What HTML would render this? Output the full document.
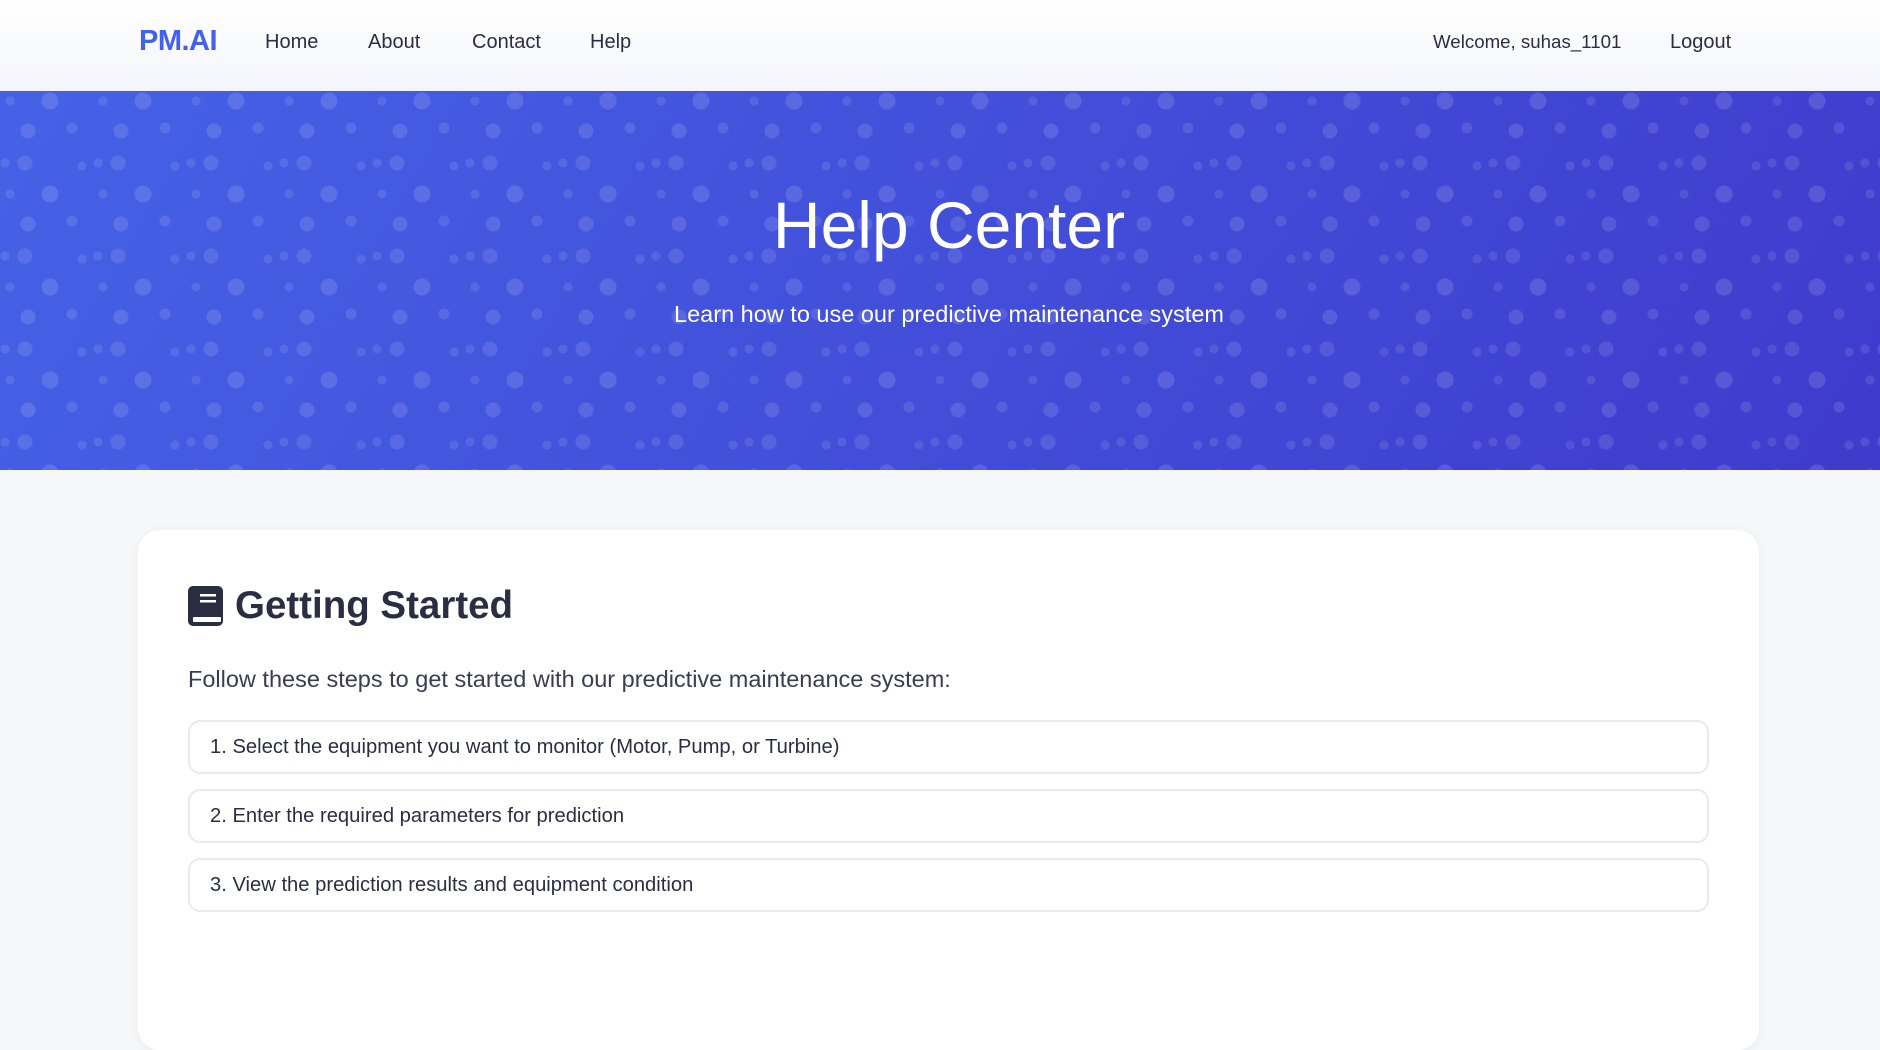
<!DOCTYPE html>
<html><head><meta charset="utf-8"><style>
*{margin:0;padding:0;box-sizing:border-box}
body{width:1880px;height:1004px;overflow:hidden;background:#f6f7f9;font-family:"Segoe UI","Liberation Sans",sans-serif;color:#2b2d42}
.nav{height:91px;background:linear-gradient(#fff,#f4f5fc);position:relative}
.nav span{position:absolute;top:31px;font-size:20px;color:#2b2d42}
.logo{left:139px!important;top:25px!important;font-size:29px!important;font-weight:bold;color:#4361ee!important;letter-spacing:-0.5px}
.hero{height:379px;padding-left:18px;background:
radial-gradient(circle at 50px 10px,rgba(255,255,255,.13) 8px,transparent 9px),
radial-gradient(circle at 28px 40px,rgba(255,255,255,.12) 7px,transparent 8px),
radial-gradient(circle at 72px 37px,rgba(255,255,255,.11) 5px,transparent 6px),
radial-gradient(circle at 25px 72px,rgba(255,255,255,.11) 7px,transparent 8px),
radial-gradient(circle at 5px 72px,rgba(255,255,255,.1) 4px,transparent 5px),
radial-gradient(circle at 82px 75px,rgba(255,255,255,.1) 4px,transparent 5px),
radial-gradient(circle at 10px 10px,rgba(255,255,255,.1) 4px,transparent 5px),
linear-gradient(120deg,#4562e6,#3f3bcc);background-size:93px 93px,93px 93px,93px 93px,93px 93px,93px 93px,93px 93px,93px 93px,100% 100%;text-align:center;color:#fff}
.hero h1{font-weight:300;font-size:66px;padding-top:94px;line-height:80px;font-family:"Segoe UI Light","Liberation Sans",sans-serif}
.hero p{font-weight:300;font-size:23.5px;margin-top:36px}
.card{position:absolute;left:138px;top:530px;width:1621px;height:520px;background:#fff;border-radius:22px;box-shadow:0 2px 12px rgba(0,0,0,.05)}
.card h2{position:absolute;left:50px;top:54px;font-size:38.5px;font-weight:bold;display:flex;align-items:center;gap:12px}
.card .intro{position:absolute;left:50px;top:136px;font-size:23.5px;font-weight:300;color:#3a3c50}
.item{position:absolute;left:50px;width:1521px;height:54px;border:2px solid #e8eaee;border-radius:12px;font-size:20.2px;padding-left:20px;line-height:50px;color:#2b2d42}
</style></head><body>
<div class="nav">
<span class="logo">PM.AI</span>
<span style="left:265px">Home</span>
<span style="left:368px">About</span>
<span style="left:472px">Contact</span>
<span style="left:590px">Help</span>
<span style="left:1433px;font-size:18.7px;top:31px">Welcome, suhas_1101</span>
<span style="left:1670px">Logout</span>
</div>
<div class="hero"><h1>Help Center</h1><p>Learn how to use our predictive maintenance system</p></div>
<div class="card">
<h2><svg width="35" height="40" viewBox="0 0 35 40"><rect x="0" y="0" width="35" height="40" rx="5" fill="#2b2d42"/><rect x="12" y="8" width="16" height="2.5" fill="#fff"/><rect x="12" y="14" width="16" height="2.5" fill="#fff"/><rect x="5" y="31" width="28" height="5" rx="1" fill="#fff"/></svg>Getting Started</h2>
<div class="intro">Follow these steps to get started with our predictive maintenance system:</div>
<div class="item" style="top:190px">1. Select the equipment you want to monitor (Motor, Pump, or Turbine)</div>
<div class="item" style="top:259px">2. Enter the required parameters for prediction</div>
<div class="item" style="top:328px">3. View the prediction results and equipment condition</div>
</div>
</body></html>
